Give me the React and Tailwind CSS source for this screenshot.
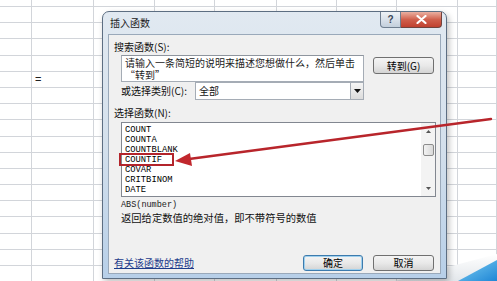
import React from "react";

const COLS = [32, 62, 61, 60, 62, 60, 60, 61, 39];
const ROWS = 18;

function Grid() {
  const cells = [];
  for (let r = 0; r < ROWS; r++) {
    for (let c = 0; c < COLS.length; c++) {
      cells.push(
        <div
          key={r + "-" + c}
          className="flex items-center border-b border-r border-[#d2d5da] pl-[3px] text-[11px] leading-none text-[#222] font-['Liberation_Sans',sans-serif]"
        >
          {r === 5 && c === 1 ? "=" : ""}
        </div>
      );
    }
  }
  return (
    <div className="grid h-[281px] w-[497px] grid-cols-[32px_62px_61px_60px_62px_60px_60px_61px_39px] grid-rows-[7px_repeat(17,16.2px)]">
      {cells}
    </div>
  );
}

const btn =
  "flex items-center justify-center rounded-[3px] border bg-gradient-to-b from-[#f4f4f4] via-[#e9e9e9] to-[#d4d4d4] text-[10px] leading-none text-black";

const items = ["COUNT", "COUNTA", "COUNTBLANK", "COUNTIF", "COVAR", "CRITBINOM", "DATE"];

function Dialog() {
  return (
    <div className="absolute left-[102px] top-[11px] flex h-[268px] w-[345px] flex-col rounded-t-[7px] border border-[#5d6e82] bg-gradient-to-b from-[#e1e9f1] via-[#d4e0ec] to-[#b7cfe8] shadow-[2px_3px_6px_rgba(0,0,0,0.25)] font-['Noto_Sans_CJK_SC',sans-serif]">
      {/* title bar */}
      <div className="flex h-[22px] items-start justify-between">
        <span className="pl-[7px] pt-[5px] text-[10px] leading-[12px] text-[#1b1b1b]">插入函数</span>
        <div className="mr-[4px] flex">
          <div className="flex h-[16px] w-[21px] items-center justify-center rounded-bl-[4px] border border-t-0 border-[#6f7e90] bg-gradient-to-b from-[#eef2f6] via-[#d9e1ea] to-[#c3cfdc] text-[10px] font-bold leading-none text-[#3a4656] font-['Liberation_Sans',sans-serif]">
            ?
          </div>
          <div className="flex h-[16px] w-[41px] items-center justify-center rounded-br-[4px] border border-l-0 border-t-0 border-[#70433d] bg-gradient-to-b from-[#e9b0a2] via-[#d0604d] to-[#c0402f]">
            <svg width="11" height="9" viewBox="0 0 11 9">
              <path d="M1.5 1 L9.5 8 M9.5 1 L1.5 8" stroke="#ffffff" strokeWidth="2.2" strokeLinecap="round" />
            </svg>
          </div>
        </div>
      </div>

      {/* content panel */}
      <div className="mx-[5px] mb-[4px] flex flex-1 flex-col border border-[#9aa9ba] bg-[#f0f0f0] pl-[5px] text-[10px] leading-[12px] text-[#111]">
        <div className="mt-[6px] h-[12px]">搜索函数(S):</div>

        <div className="mt-[2px] flex items-start">
          <div className="ml-[7px] h-[27px] w-[243px] border border-[#a5acb5] border-t-[#8e959e] bg-white pl-[3px] pt-[1px] text-[10px] leading-[12px] text-[#222]">
            请输入一条简短的说明来描述您想做什么，然后单击
            <br />
            “转到”
          </div>
          <div className={btn + " ml-[9px] mt-[2px] h-[17px] w-[61px] border-[#707070]"}>转到(G)</div>
        </div>

        <div className="flex items-center">
          <div className="ml-[7px] w-[74px]">或选择类别(C):</div>
          <div className="flex h-[18px] w-[169px] items-stretch border border-[#a5acb5] bg-white">
            <div className="flex flex-1 items-center pl-[3px]">全部</div>
            <div className="flex w-[13px] items-center justify-center border-l border-[#a5acb5] bg-gradient-to-b from-[#f5f5f5] to-[#dcdcdc]">
              <svg width="7" height="4" viewBox="0 0 7 4">
                <path d="M0 0 H7 L3.5 4 Z" fill="#111" />
              </svg>
            </div>
          </div>
        </div>

        <div className="mt-[7px] h-[12px]">选择函数(N):</div>

        <div className="relative ml-[7px] mt-[3px] flex h-[75px] w-[315px] border border-[#828790] bg-white">
          <div className="flex-1 pl-[3px] pt-[2px] font-['Liberation_Mono',monospace] text-[8.8px] leading-[10px] text-black">
            {items.map((it) => (
              <div key={it}>{it}</div>
            ))}
          </div>
          <div className="flex w-[14px] flex-col items-center bg-[#f3f3f3]">
            <div className="flex h-[16px] items-center justify-center">
              <svg width="5" height="3" viewBox="0 0 5 3">
                <path d="M0 3 L2.5 0 L5 3 Z" fill="#555" />
              </svg>
            </div>
            <div className="mt-[5px] h-[12px] w-[11px] rounded-[2px] border border-[#8c8c8c] bg-gradient-to-r from-[#f2f2f2] to-[#d9d9d9]" />
            <div className="flex-1" />
            <div className="flex h-[16px] items-center justify-center">
              <svg width="5" height="3" viewBox="0 0 5 3">
                <path d="M0 0 L5 0 L2.5 3 Z" fill="#555" />
              </svg>
            </div>
          </div>
          <div className="absolute left-[-3px] top-[30px] h-[13px] w-[55px] border-2 border-[#b3242b]" />
        </div>

        <div className="ml-[7px] mt-[3px] font-['Liberation_Mono',monospace] text-[8.5px] leading-[10px] text-[#1a1a1a]">
          ABS(number)
        </div>
        <div className="ml-[7px] mt-[2px] text-[10.3px] leading-[12px] text-[#111]">
          返回给定数值的绝对值，即不带符号的数值
        </div>

        <div className="mt-auto flex items-end justify-between pb-[2px] pr-[6px]">
          <span className="mb-[2px] text-[10px] leading-[12px] text-[#1e3c8c] underline">有关该函数的帮助</span>
          <div className="flex gap-[10px]">
            <div className={btn + " h-[16px] w-[60px] border-[#3d7bad] shadow-[inset_0_0_0_1px_#9fd0ee]"}>确定</div>
            <div className={btn + " h-[16px] w-[61px] border-[#707070]"}>取消</div>
          </div>
        </div>
      </div>
    </div>
  );
}

export default function App() {
  return (
    <div className="relative h-[281px] w-[497px] overflow-hidden bg-white">
      <Grid />
      <svg className="pointer-events-none absolute left-0 top-0" width="497" height="281" viewBox="0 0 497 281">
        <defs>
          <linearGradient id="curl" x1="0" y1="0" x2="1" y2="1">
            <stop offset="0" stopColor="#7fd0f2" />
            <stop offset="1" stopColor="#1f86d6" />
          </linearGradient>
          <linearGradient id="shade" x1="0" y1="0" x2="0" y2="1">
            <stop offset="0" stopColor="#ffffff" />
            <stop offset="1" stopColor="#e3e7eb" />
          </linearGradient>
        </defs>
        <polygon points="395,281 497,254 497,281" fill="url(#shade)" />
        <polygon points="458,281 497,260 497,281" fill="url(#curl)" />
      </svg>
      <Dialog />
      <svg className="pointer-events-none absolute left-0 top-0" width="497" height="281" viewBox="0 0 497 281">
        <line x1="491" y1="119" x2="189" y2="159" stroke="#b8252b" strokeWidth="2.4" strokeLinecap="round" />
        <polygon points="175,161 190,153 192,166" fill="#c1272d" />
      </svg>
    </div>
  );
}
